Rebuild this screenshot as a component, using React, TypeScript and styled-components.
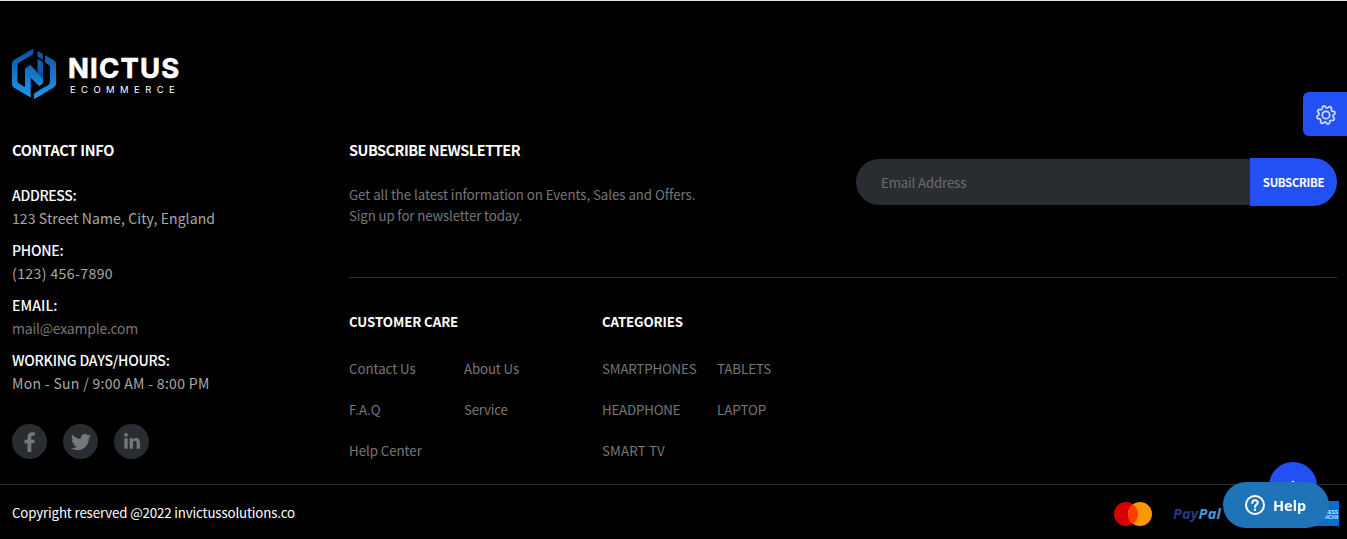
import React from "react";
import styled, { createGlobalStyle, css } from "styled-components";

const GlobalStyle = createGlobalStyle`
  * { box-sizing: border-box; }
  body { margin: 0; background: #000; overflow: hidden; font-family: "Noto Sans CJK SC", "Open Sans", sans-serif; }
  h3, p, ul, dl, dd, dt { margin: 0; padding: 0; }
  ul { list-style: none; }
`;

const Footer = styled.footer`
  width: 1347px;
  height: 539px;
  background: #000;
  border-top: 1px solid #e4e4e4;
  overflow: hidden;
  display: flex;
  flex-direction: column;
`;

const Main = styled.div`
  flex: none;
  height: 483px;
  padding: 47px 10px 0 12px;
`;

const Brand = styled.div`
  display: flex;
  align-items: flex-start;
  height: 91px;
`;

const BrandMark = styled.svg`
  width: 44px;
  height: 52px;
`;

const BrandWords = styled.div`
  margin: 4px 0 0 12px;
  color: #fff;
  font-family: Inter, sans-serif;
  white-space: nowrap;
`;

const BrandName = styled.div`
  font-size: 27.4px;
  line-height: 33px;
  height: 32px;
  font-weight: 700;
  letter-spacing: 1.2px;
  -webkit-text-stroke: 0.6px #fff;
`;

const BrandSub = styled.div`
  margin-left: 2px;
  font-size: 9.5px;
  line-height: 12px;
  letter-spacing: 5.4px;
`;

const Columns = styled.div`
  display: grid;
  grid-template-columns: 337px 1fr;
`;

const tracking = css<{ $track?: number }>`
  letter-spacing: ${(p) => p.$track ?? 0}px;
  white-space: nowrap;
`;

const Title = styled.h3<{ $size?: number; $track?: number }>`
  color: #fff;
  font-size: ${(p) => p.$size ?? 14.5}px;
  line-height: 21px;
  font-weight: 700;
  ${tracking}
`;

const ContactList = styled.dl`
  margin-top: 24px;
`;

const ContactItem = styled.div`
  height: 55px;
  font-size: 14px;
  line-height: 23px;
`;

const Term = styled.dt<{ $track?: number }>`
  color: #fff;
  font-weight: 500;
  ${tracking}
`;

const Detail = styled.dd<{ $dim?: boolean; $track?: number }>`
  color: ${(p) => (p.$dim ? "#777" : "#a8a8a8")};
  ${tracking}
`;

const Socials = styled.div`
  display: flex;
  gap: 16px;
  margin-top: 20px;
`;

const SocialLink = styled.a`
  width: 35px;
  height: 35px;
  border-radius: 50%;
  background: #292c31;
  display: flex;
  align-items: center;
  justify-content: center;
  svg { display: block; fill: #777; }
`;

const Newsletter = styled.section`
  display: flex;
  justify-content: space-between;
  height: 139px;
  border-bottom: 1px solid #313131;
`;

const Blurb = styled.div`
  margin-top: 24px;
  font-size: 13.3px;
  line-height: 21px;
  color: #777;
`;

const Line = styled.p<{ $track?: number }>`
  ${tracking}
`;

const Form = styled.form`
  display: flex;
  align-items: center;
  height: 48px;
  margin-top: 19px;
`;

const EmailField = styled.div`
  width: 394px;
  height: 46px;
  padding-left: 25px;
  border-radius: 24px 0 0 24px;
  background: #292c31;
  color: #6b6c6e;
  font-size: 13.3px;
  line-height: 48px;
  letter-spacing: -0.17px;
`;

const SubscribeButton = styled.button`
  width: 87px;
  height: 48px;
  padding: 0;
  border: 0;
  border-radius: 0 24px 24px 0;
  background: #2250f4;
  color: #fff;
  font: 700 11.4px/49px "Noto Sans CJK SC", sans-serif;
  letter-spacing: -0.3px;
  white-space: nowrap;
`;

const LinkGroups = styled.div`
  display: flex;
  padding-top: 33px;
`;

const LinkGroup = styled.section`
  width: 253px;
`;

const LinkList = styled.ul`
  display: grid;
  grid-template-columns: 115px 1fr;
  grid-auto-rows: 41px;
  margin-top: 26px;
`;

const LinkItem = styled.li<{ $track?: number }>`
  color: #777;
  font-size: 13.3px;
  line-height: 21px;
  ${tracking}
`;

const Bottom = styled.div`
  flex: none;
  height: 55px;
  border-top: 1px solid #313131;
  padding: 0 8px 0 12px;
  display: flex;
  justify-content: space-between;
`;

const Copyright = styled.p<{ $track?: number }>`
  color: #fff;
  font-size: 13.3px;
  line-height: 56px;
  ${tracking}
`;

const Payments = styled.div`
  display: flex;
  align-items: center;
  height: 57px;
`;

const CardRings = styled.svg`
  width: 40px;
  height: 26px;
  margin-right: 20px;
`;

const PayPal = styled.span`
  width: 141px;
  color: #253b80;
  font: italic 700 14.5px/20px "Open Sans", sans-serif;
  letter-spacing: 0.2px;
  b { color: #4698d8; font-weight: 700; }
`;

const Amex = styled.svg`
  width: 25px;
  height: 25px;
`;

const SettingsTab = styled.div`
  position: fixed;
  right: 0;
  top: 92px;
  width: 44px;
  height: 44px;
  padding: 2px 0 0 2px;
  border-radius: 6px 0 0 6px;
  background: #2250f4;
  display: flex;
  align-items: center;
  justify-content: center;
`;

const ScrollTop = styled.div`
  position: fixed;
  left: 1269px;
  top: 462px;
  width: 48px;
  height: 48px;
  border-radius: 50%;
  background: #2250f4;
  display: flex;
  justify-content: center;
  svg { margin-top: 18px; }
`;

const HelpButton = styled.div`
  position: fixed;
  left: 1223px;
  top: 482px;
  width: 106px;
  height: 46px;
  border-radius: 23px;
  background: #1f73b7;
  color: #fff;
  display: flex;
  align-items: center;
  gap: 8px;
  padding-left: 22px;
  font: 700 14.5px/46px "Noto Sans", sans-serif;
`;

const contacts = [
  { term: "ADDRESS:", detail: "123 Street Name, City, England", tt: -0.3, dt: 0.1 },
  { term: "PHONE:", detail: "(123) 456-7890", tt: -0.25, dt: 0.42 },
  { term: "EMAIL:", detail: "mail@example.com", dim: true, tt: 0.1, dt: -0.22 },
  { term: "WORKING DAYS/HOURS:", detail: "Mon - Sun / 9:00 AM - 8:00 PM", tt: -0.2, dt: 0.31 },
];

const groups: { title: string; track: number; links: [string, number][] }[] = [
  {
    title: "CUSTOMER CARE",
    track: -0.1,
    links: [["Contact Us", -0.05], ["About Us", -0.15], ["F.A.Q", 0], ["Service", -0.25], ["Help Center", -0.05]],
  },
  {
    title: "CATEGORIES",
    track: -0.15,
    links: [["SMARTPHONES", -0.17], ["TABLETS", -0.05], ["HEADPHONE", -0.2], ["LAPTOP", 0], ["SMART TV", 0.15]],
  },
];

const gearPath = (() => {
  const pts: string[] = [];
  for (let i = 0; i < 144; i++) {
    const a = (i / 144) * Math.PI * 2;
    const r = 8.2 + 1.15 * Math.tanh(1.6 * Math.cos(8 * a + 2.1));
    pts.push(`${(11 + r * Math.cos(a)).toFixed(2)} ${(11 + r * Math.sin(a)).toFixed(2)}`);
  }
  return `M${pts.join("L")}Z`;
})();

export default function App() {
  return (
    <>
      <GlobalStyle />
      <Footer>
        <Main>
          <Brand>
            <BrandMark viewBox="0 0 44 52">
              <defs>
                <linearGradient id="mark" gradientUnits="userSpaceOnUse" x1="0" y1="0" x2="0" y2="52">
                  <stop offset="0" stopColor="#0f4f9e" />
                  <stop offset="1" stopColor="#1c9cf2" />
                </linearGradient>
                <linearGradient id="fold" gradientUnits="userSpaceOnUse" x1="31" y1="20" x2="24" y2="36">
                  <stop offset="0" stopColor="#0e5cae" />
                  <stop offset="1" stopColor="#0b3f7d" />
                </linearGradient>
              </defs>
              <g fill="url(#mark)">
                <path d="M21.500 1V4.500Q21.500 6 20 6.900L7 14.500Q5.500 15.500 5.500 17V33Q5.500 34.500 7 35.500L13 39V20L18.700 25V49.500L2 39.800Q0 38.500 0 36.500V15.500Q0 13.300 2 12L18 2.500Z" />
                <path d="M33 7.200L42 12.200Q44 13.500 44 15.700V35.500Q44 38 42 39.300L26 49Q24 50 22 51V47Q22 45.300 23.500 44.500L36.500 36.800Q38 35.800 38 34V19Q38 17.500 36.700 16.700L34.500 15.500Q33 14.500 33 13Z" />
                <path d="M25.500 3L30.800 6V11.500L25.500 8.500Z" />
                <path d="M13 20.500L18.500 17L31 30.500V34Q31 36 29.500 36.700L27 38L13 24Z" />
              </g>
              <path d="M25.500 11L31 14V31L25.500 25Z" fill="url(#fold)" />
            </BrandMark>
            <BrandWords>
              <BrandName>NICTUS</BrandName>
              <BrandSub>ECOMMERCE</BrandSub>
            </BrandWords>
          </Brand>
          <Columns>
            <section>
              <Title $track={-0.25}>CONTACT INFO</Title>
              <ContactList>
                {contacts.map((c) => (
                  <ContactItem key={c.term}>
                    <Term $track={c.tt}>{c.term}</Term>
                    <Detail $dim={c.dim} $track={c.dt}>{c.detail}</Detail>
                  </ContactItem>
                ))}
              </ContactList>
              <Socials>
                <SocialLink>
                  <svg width="12" height="20" viewBox="0 0 12 20"><path d="M3.500 20V11.300H.5V7.800H3.500V5C3.500 2 5.200.3 8 .3 9.300.3 10.500.5 10.800.5V3.600H9.200C7.700 3.600 7.300 4.400 7.300 5.400V7.800H10.700L10.200 11.300H7.300V20Z" /></svg>
                </SocialLink>
                <SocialLink>
                  <svg width="20" height="20" viewBox="0 0 512 512"><path d="M459.370 151.716c.325 4.548.325 9.097.325 13.645 0 138.720-105.583 298.558-298.558 298.558-59.452 0-114.680-17.219-161.137-47.106 8.447.974 16.568 1.299 25.340 1.299 49.055 0 94.213-16.568 130.274-44.832-46.132-.975-84.792-31.188-98.112-72.772 6.498.974 12.995 1.624 19.818 1.624 9.421 0 18.843-1.300 27.614-3.573-48.081-9.747-84.143-51.980-84.143-102.985v-1.299c13.969 7.797 30.214 12.670 47.431 13.319-28.264-18.843-46.781-51.005-46.781-87.391 0-19.492 5.197-37.360 14.294-52.954 51.655 63.675 129.300 105.258 216.365 109.807-1.624-7.797-2.599-15.918-2.599-24.040 0-57.828 46.782-104.934 104.934-104.934 30.213 0 57.502 12.670 76.670 33.137 23.715-4.548 46.456-13.320 66.599-25.340-7.798 24.366-24.366 44.833-46.132 57.827 21.117-2.273 41.584-8.122 60.426-16.243-14.292 20.791-32.161 39.308-52.628 54.253z" /></svg>
                </SocialLink>
                <SocialLink>
                  <svg width="18" height="18" viewBox="0 0 448 512"><path d="M100.280 448H7.400V148.900h92.880zM53.790 108.100C24.090 108.100 0 83.500 0 53.800a53.790 53.790 0 0 1 107.580 0c0 29.700-24.100 54.300-53.790 54.300zM447.900 448h-92.680V302.400c0-34.700-.7-79.200-48.290-79.200-48.290 0-55.690 37.700-55.690 76.700V448h-92.780V148.900h89.080v40.800h1.300c12.400-23.500 42.690-48.300 87.880-48.300 94 0 111.280 61.900 111.280 142.300V448z" /></svg>
                </SocialLink>
              </Socials>
            </section>
            <div>
              <Newsletter>
                <div>
                  <Title $track={-0.5}>SUBSCRIBE NEWSLETTER</Title>
                  <Blurb>
                    <Line $track={-0.06}>Get all the latest information on Events, Sales and Offers.</Line>
                    <Line $track={-0.14}>Sign up for newsletter today.</Line>
                  </Blurb>
                </div>
                <Form>
                  <EmailField>Email Address</EmailField>
                  <SubscribeButton type="button">SUBSCRIBE</SubscribeButton>
                </Form>
              </Newsletter>
              <LinkGroups>
                {groups.map((g) => (
                  <LinkGroup key={g.title}>
                    <Title $size={13.3} $track={g.track}>{g.title}</Title>
                    <LinkList>
                      {g.links.map(([label, track]) => (
                        <LinkItem key={label} $track={track}>{label}</LinkItem>
                      ))}
                    </LinkList>
                  </LinkGroup>
                ))}
              </LinkGroups>
            </div>
          </Columns>
        </Main>
        <Bottom>
          <Copyright $track={-0.15}>Copyright reserved @2022 invictussolutions.co</Copyright>
          <Payments>
            <CardRings viewBox="0 0 40 26">
              <circle cx="13" cy="13" r="12" fill="#d50000" />
              <circle cx="27" cy="13" r="12" fill="#ff9800" />
              <path d="M20 3.250a12 12 0 0 1 0 19.500a12 12 0 0 1 0-19.500Z" fill="#ff3d00" />
            </CardRings>
            <PayPal>Pay<b>Pal</b></PayPal>
            <Amex viewBox="0 0 25 25">
              <rect width="25" height="25" fill="#016fd0" />
              <g fill="#d9e9f8" fontFamily="Liberation Sans" fontWeight="700" fontSize="6">
                <text x="1" y="12.500" textLength="23" lengthAdjust="spacingAndGlyphs">EXPRESS</text>
                <text x="1" y="17.800" textLength="23" lengthAdjust="spacingAndGlyphs">AMERICAN</text>
              </g>
            </Amex>
          </Payments>
        </Bottom>
      </Footer>
      <SettingsTab>
        <svg width="22" height="22" viewBox="0 0 22 22" fill="none" stroke="#d5deff" strokeWidth="1.700">
          <path d={gearPath} />
          <circle cx="11" cy="11" r="3.700" />
        </svg>
      </SettingsTab>
      <ScrollTop>
        <svg width="14" height="10" viewBox="0 0 14 10" fill="none" stroke="#fff" strokeWidth="2"><path d="M1 8L7 2L13 8" /></svg>
      </ScrollTop>
      <HelpButton>
        <svg width="20" height="20" viewBox="0 0 20 20" fill="none" stroke="#fff" strokeWidth="2">
          <circle cx="10" cy="10" r="9" />
          <path d="M7.300 8C7.300 4.300 12.700 4.300 12.700 7.700C12.700 9.600 10 9.700 10 12" strokeLinecap="round" />
          <circle cx="10" cy="14.700" r="1.200" fill="#fff" stroke="none" />
        </svg>
        Help
      </HelpButton>
    </>
  );
}
